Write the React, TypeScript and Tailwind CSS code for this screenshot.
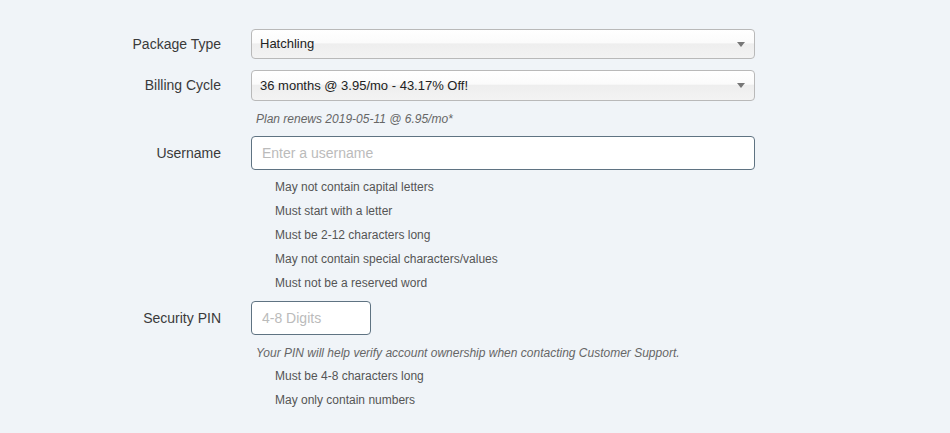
import React from "react";

interface FieldRowProps {
  label: string;
  children: React.ReactNode;
  className?: string;
}

function FieldRow({ label, children, className = "" }: FieldRowProps) {
  return (
    <div className={`flex items-center ${className}`}>
      <label className="w-[221px] shrink-0 text-right text-[14px] text-[#3a3a3a]">
        {label}
      </label>
      <div className="ml-[30px]">{children}</div>
    </div>
  );
}

function FakeSelect({ value, height }: { value: string; height: string }) {
  return (
    <div
      className={`flex w-[504px] ${height} items-center justify-between rounded-[4px] border border-[#b9b9b9] bg-[linear-gradient(to_bottom,#ffffff_0%,#fbfbfb_45%,#eeeeee_50%,#f3f3f3_100%)] pl-[8px] pr-[9px] text-[13px] text-[#222]`}
    >
      <span>{value}</span>
      <svg width="8" height="5" viewBox="0 0 8 5">
        <path d="M0 0 L8 0 L4 5 Z" fill="#777" />
      </svg>
    </div>
  );
}

function Rules({ items, className = "" }: { items: string[]; className?: string }) {
  return (
    <ul className={`ml-[275px] text-[12px] leading-[24px] text-[#555] ${className}`}>
      {items.map((item) => (
        <li key={item}>{item}</li>
      ))}
    </ul>
  );
}

export default function App() {
  return (
    <div className="min-h-[433px] w-full bg-[#f0f4f8] pt-[29px] font-['Liberation_Sans',Arial,sans-serif]">
      <FieldRow label="Package Type">
        <FakeSelect value="Hatchling" height="h-[30px]" />
      </FieldRow>

      <FieldRow label="Billing Cycle" className="mt-[11px]">
        <FakeSelect value="36 months @ 3.95/mo - 43.17% Off!" height="h-[31px]" />
      </FieldRow>

      <p className="ml-[256px] mt-[9px] text-[12px] italic leading-[18px] text-[#666]">
        Plan renews 2019-05-11 @ 6.95/mo*
      </p>

      <FieldRow label="Username" className="mt-[8px]">
        <input
          placeholder="Enter a username"
          className="h-[34px] w-[504px] rounded-[4px] border border-[#5f7382] bg-white px-[10px] text-[14px] text-[#333] outline-none placeholder:text-[#bbbbbb]"
        />
      </FieldRow>

      <Rules
        className="mt-[5px]"
        items={[
          "May not contain capital letters",
          "Must start with a letter",
          "Must be 2-12 characters long",
          "May not contain special characters/values",
          "Must not be a reserved word",
        ]}
      />

      <FieldRow label="Security PIN" className="mt-[6px]">
        <input
          placeholder="4-8 Digits"
          className="h-[34px] w-[120px] rounded-[4px] border border-[#5f7382] bg-white px-[10px] text-[14px] text-[#333] outline-none placeholder:text-[#bbbbbb]"
        />
      </FieldRow>

      <p className="ml-[256px] mt-[9px] text-[12px] italic leading-[18px] text-[#666]">
        Your PIN will help verify account ownership when contacting Customer Support.
      </p>

      <Rules
        className="mt-[2px]"
        items={["Must be 4-8 characters long", "May only contain numbers"]}
      />
    </div>
  );
}
